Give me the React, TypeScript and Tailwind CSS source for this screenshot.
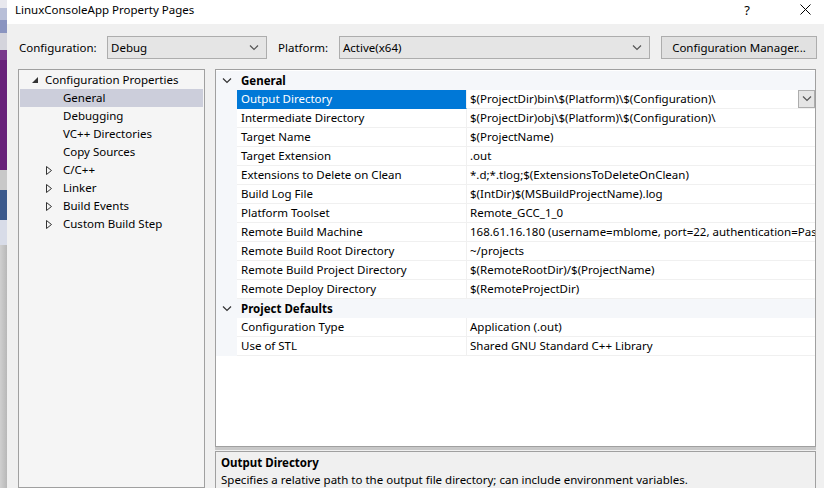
import React from 'react';

const FONT = "font-['Segoe_UI','Noto_Sans',sans-serif]";

function Chevron({ className = '' }: { className?: string }) {
  return (
    <svg width="10" height="6" viewBox="0 0 10 6" className={className}>
      <path d="M1 0.5 L5 4.5 L9 0.5" fill="none" stroke="currentColor" strokeWidth="1.2" />
    </svg>
  );
}

function Combo({ value, width }: { value: string; width: string }) {
  return (
    <div className={`${width} h-[23px] flex items-center justify-between border border-[#adadad] bg-[#e5e5e5] pl-[3px] pr-[7px] text-black`}>
      <span>{value}</span>
      <Chevron className="text-[#555]" />
    </div>
  );
}

const treeItems: { label: string; expander?: boolean; selected?: boolean }[] = [
  { label: 'General', selected: true },
  { label: 'Debugging' },
  { label: 'VC++ Directories' },
  { label: 'Copy Sources' },
  { label: 'C/C++', expander: true },
  { label: 'Linker', expander: true },
  { label: 'Build Events', expander: true },
  { label: 'Custom Build Step', expander: true },
];

type Row = { name: string; value: string; selected?: boolean };

const general: Row[] = [
  { name: 'Output Directory', value: '$(ProjectDir)bin\\$(Platform)\\$(Configuration)\\', selected: true },
  { name: 'Intermediate Directory', value: '$(ProjectDir)obj\\$(Platform)\\$(Configuration)\\' },
  { name: 'Target Name', value: '$(ProjectName)' },
  { name: 'Target Extension', value: '.out' },
  { name: 'Extensions to Delete on Clean', value: '*.d;*.tlog;$(ExtensionsToDeleteOnClean)' },
  { name: 'Build Log File', value: '$(IntDir)$(MSBuildProjectName).log' },
  { name: 'Platform Toolset', value: 'Remote_GCC_1_0' },
  { name: 'Remote Build Machine', value: '168.61.16.180 (username=mblome, port=22, authentication=Password)' },
  { name: 'Remote Build Root Directory', value: '~/projects' },
  { name: 'Remote Build Project Directory', value: '$(RemoteRootDir)/$(ProjectName)' },
  { name: 'Remote Deploy Directory', value: '$(RemoteProjectDir)' },
];

const defaults: Row[] = [
  { name: 'Configuration Type', value: 'Application (.out)' },
  { name: 'Use of STL', value: 'Shared GNU Standard C++ Library' },
];

function Category({ title }: { title: string }) {
  return (
    <div className="flex h-[19px] items-center bg-[#f5f7fa]">
      <div className="w-[21px] flex justify-center text-[#333]">
        <Chevron />
      </div>
      <span className="pl-[4px] font-bold">{title}</span>
    </div>
  );
}

function PropRow({ row }: { row: Row }) {
  return (
    <div className="flex h-[19px]">
      <div className="w-[21px] shrink-0 bg-[#f5f7fa]" />
      <div
        className={`w-[230px] shrink-0 flex items-center pl-[4px] border-b border-r border-[#f0f0f0] ${
          row.selected ? 'bg-[#0078d7] text-white border-b-[#0078d7]' : ''
        }`}
      >
        {row.name}
      </div>
      <div className="flex-1 min-w-0 flex items-center pl-[3px] border-b border-[#f0f0f0] overflow-hidden whitespace-nowrap relative">
        {row.value}
        {row.selected && (
          <div className="absolute right-0 top-0 w-[17px] h-[18px] border border-[#adadad] bg-[#e5e5e5] flex items-center justify-center text-[#555]">
            <Chevron />
          </div>
        )}
      </div>
    </div>
  );
}

export default function App() {
  return (
    <div className={`w-[824px] h-[488px] flex overflow-hidden ${FONT} text-[11.5px] text-black`}>
      {/* window behind the dialog */}
      <div className="w-[7px] flex flex-col shrink-0">
        <div className="h-[8px] bg-[#e8e8ee]" />
        <div className="h-[12px] bg-[#b8bfd8]" />
        <div className="h-[13px] bg-[#8a94c0]" />
        <div className="h-[17px] bg-[#d4d4dc]" />
        <div className="h-[10px] bg-[#7a3a8c]" />
        <div className="h-[110px] bg-[#68217a]" />
        <div className="h-[20px] bg-[#c8c8c8]" />
        <div className="h-[30px] bg-[#3c5a8c]" />
        <div className="h-[25px] bg-[#d8dce8]" />
        <div className="flex-1 bg-gradient-to-r from-[#d0d0d0] to-[#b8b8b8]" />
      </div>

      <div className="flex-1 flex flex-col bg-[#f0f0f0]">
        {/* title bar */}
        <div className="h-[24px] bg-white flex items-start pt-[1px] shrink-0">
          <span className="pl-[8px]">LinuxConsoleApp Property Pages</span>
          <span className="ml-auto mr-[50px] text-[13px]">?</span>
          <svg width="11" height="11" viewBox="0 0 11 11" className="mr-[13px] mt-[3px]">
            <path d="M0.5 0.5 L10.5 10.5 M10.5 0.5 L0.5 10.5" stroke="#000" strokeWidth="1" />
          </svg>
        </div>

        {/* configuration bar */}
        <div className="flex items-center h-[23px] mt-[12px] pl-[12px]">
          <span className="w-[88px]">Configuration:</span>
          <Combo value="Debug" width="w-[160px]" />
          <span className="ml-[11px] w-[61px]">Platform:</span>
          <Combo value="Active(x64)" width="w-[311px]" />
          <div className="ml-[11px] w-[156px] h-[23px] border border-[#adadad] bg-[#e1e1e1] flex items-center justify-center">
            Configuration Manager...
          </div>
        </div>

        {/* main area */}
        <div className="flex flex-1 mt-[10px] pl-[11px] min-h-0">
          {/* tree */}
          <div className="w-[187px] shrink-0 border border-[#a0a0a0] bg-[#f5f5f5] pt-[1px] px-[1px]">
            <div className="flex items-center h-[18px]">
              <svg width="6" height="6" viewBox="0 0 6 6" className="ml-[12px] mr-[7px]">
                <path d="M6 0 L6 6 L0 6 Z" fill="#333" />
              </svg>
              <span>Configuration Properties</span>
            </div>
            {treeItems.map((t) => (
              <div key={t.label} className={`flex items-center h-[18px] ${t.selected ? 'bg-[#cccedb]' : ''}`}>
                <div className="w-[43px] flex justify-end pr-[11px]">
                  {t.expander && (
                    <svg width="6" height="9" viewBox="0 0 6 9">
                      <path d="M0.5 0.5 L5.5 4.5 L0.5 8.5 Z" fill="none" stroke="#333" strokeWidth="1" />
                    </svg>
                  )}
                </div>
                <span>{t.label}</span>
              </div>
            ))}
          </div>

          {/* grid + description */}
          <div className="w-[601px] ml-[10px] flex flex-col">
            <div className="h-[379px] border border-[#a0a0a0] bg-white overflow-hidden pt-[1px]">
              <Category title="General" />
              {general.map((r) => (
                <PropRow key={r.name} row={r} />
              ))}
              <Category title="Project Defaults" />
              {defaults.map((r) => (
                <PropRow key={r.name} row={r} />
              ))}
            </div>
            <div className="h-[3px] bg-[#c8c8c8]" />
            <div className="flex-1 border border-b-0 border-[#a0a0a0] mt-[1px] bg-[#f0f0f0] pl-[5px] pt-[2px]">
              <div className="font-bold leading-[17px]">Output Directory</div>
              <div className="leading-[17px]">Specifies a relative path to the output file directory; can include environment variables.</div>
            </div>
          </div>
        </div>
      </div>
    </div>
  );
}
